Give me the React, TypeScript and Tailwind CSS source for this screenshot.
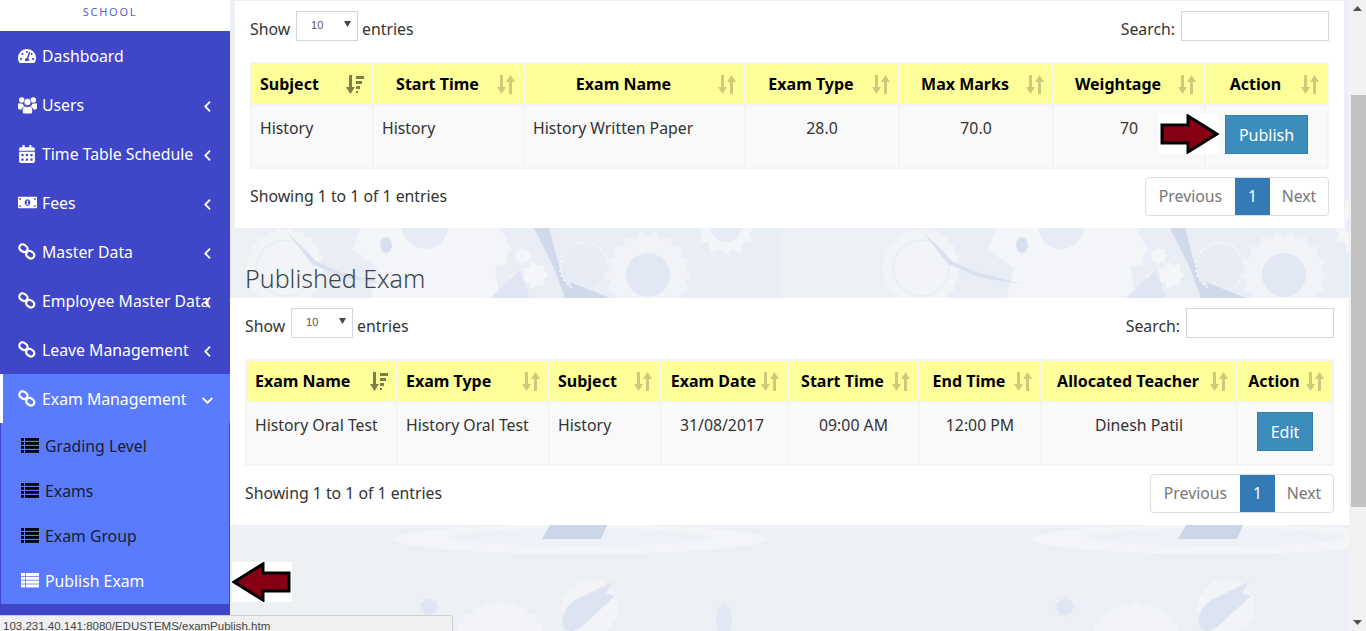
import React from 'react';
import { FaTachometerAlt, FaCalendarAlt, FaMoneyBillAlt } from 'react-icons/fa';

const font = '[font-family:"Noto_Sans",Lato,sans-serif]';

function LinkIcon() {
  return (
    <svg width="18" height="17" viewBox="0 0 18 17" fill="none" stroke="#fff" strokeWidth="2.200">
      <rect x="1.200" y="2" width="8.500" height="6.500" rx="3.200" transform="rotate(35 5.500 5.200)" />
      <rect x="8" y="8.500" width="8.500" height="6.500" rx="3.200" transform="rotate(35 12.300 11.700)" />
    </svg>
  );
}

function UsersIcon() {
  return (
    <svg width="19" height="18" viewBox="0 0 19 18" fill="#fff">
      <circle cx="3.800" cy="4" r="2.800" />
      <circle cx="15.200" cy="4" r="2.800" />
      <circle cx="9.500" cy="6" r="3.600" fill="#fff" stroke="#3f46c8" strokeWidth="0.700" />
      <path d="M0 8.500c0-1 1-1.500 2-1.200 .8 .5 2 .5 2.800 .2 .2 1.300 .8 2.200 1.500 2.900-1.300 .5-2.300 1.500-2.700 3H1.500C.5 13.400 0 12.800 0 12z" />
      <path d="M19 8.500c0-1-1-1.500-2-1.200-.8 .5-2 .5-2.800 .2-.2 1.300-.8 2.200-1.500 2.900 1.300 .5 2.300 1.500 2.700 3h2.100c1 0 1.500-.6 1.500-1.400z" />
      <path d="M5 12.500c.3-1.300 1.200-2 2.300-2 1.300 .9 3.100 .9 4.400 0 1.100 0 2 .7 2.300 2 .3 1.300 .3 2.500 .2 3.500 0 1-.8 1.500-1.600 1.500H6.400c-.8 0-1.600-.5-1.600-1.500-.1-1-.1-2.200 .2-3.500z" />
    </svg>
  );
}

function ListIcon() {
  return (
    <svg width="18" height="15" viewBox="0 0 18 15" fill="#000">
      {[0, 4, 8, 12].map((y) => (
        <g key={y}>
          <rect x="0" y={y} width="3" height="2.800" />
          <rect x="4" y={y} width="14" height="2.800" />
        </g>
      ))}
    </svg>
  );
}

function ThListIcon() {
  return (
    <svg width="18" height="15" viewBox="0 0 18 15" fill="#fff">
      {[0, 3.800, 7.600, 11.400].map((y) => (
        <g key={y}>
          <rect x="0" y={y} width="4" height="3" />
          <rect x="4.800" y={y} width="13.200" height="3" />
        </g>
      ))}
    </svg>
  );
}

function ChevLeft() {
  return (
    <svg width="7" height="11" viewBox="0 0 7 11" fill="none" stroke="#fff" strokeWidth="1.800" className="absolute left-[204px] top-[21px]">
      <path d="M6 .7L1.300 5.500 6 10.300" />
    </svg>
  );
}

function ChevDown() {
  return (
    <svg width="11" height="7" viewBox="0 0 11 7" fill="none" stroke="#fff" strokeWidth="1.800" className="absolute left-[199px] top-[23px]">
      <path d="M.7 1l4.800 4.700L10.300 1" />
    </svg>
  );
}

function SortIcon({ sorted }: { sorted?: boolean }) {
  return (
    <svg width="18" height="19" viewBox="0 0 18 19" className={sorted ? 'opacity-50' : 'opacity-20'} fill="#000">
      <path d="M3 0h3v12h3l-4.500 7L0 12h3z" />
      {sorted ? (
        <>
          <rect x="10" y="1" width="8" height="3" />
          <rect x="10" y="6" width="6" height="3" />
          <rect x="10" y="11" width="4" height="3" />
          <rect x="10" y="16" width="2" height="2" />
        </>
      ) : (
        <path d="M12 19h3V7h3L13.500 0 9 7h3z" />
      )}
    </svg>
  );
}

function Arrow({ left }: { left?: boolean }) {
  return (
    <svg width="60" height="40" viewBox="0 0 60 40" className={left ? '-scale-x-100 bg-white' : 'bg-white'}>
      <path d="M3 11h26V2l29 18-29 18v-9H3z" fill="#850014" stroke="#000" strokeWidth="3" />
    </svg>
  );
}

function gear(cx: number, cy: number, r: number, teeth: number, depth = 0.86) {
  const pts: string[] = [];
  for (let i = 0; i < teeth * 2; i++) {
    const a = (i * Math.PI) / teeth;
    const rr = i % 2 ? r * depth : r;
    pts.push(`${(cx + rr * Math.cos(a)).toFixed(1)},${(cy + rr * Math.sin(a)).toFixed(1)}`);
  }
  return pts.join(' ');
}

function Tile() {
  const pale = '#f3f5f9';
  return (
    <>
      <rect x="300" y="228" width="480" height="70" fill="#e8edf6" />
      <polygon points={gear(285, 268, 40, 22, 0.92)} fill="#f2f4f8" />
      <circle cx="285" cy="268" r="28" fill="none" stroke="#e9edf5" strokeWidth="1.500" />
      <polygon points="360,228 500,228 512,250 495,268 500,298 370,298 378,268 352,250" fill={pale} />
      <path d="M287 232 L316 261 L337 271 L387 284 L345 278 L312 264 Z" fill="#d9e0ef" />
      <ellipse cx="386" cy="245" rx="6" ry="8" fill="#d8e0ef" />
      <polygon points={gear(425, 226, 38, 14, 0.8)} fill="#f5f6fa" />
      <circle cx="425" cy="226" r="23" fill="#e6ebf5" />
      <path d="M534 228 L549 228 L558 262 L583 298 L565 298 L554 268 Z" fill="#d0d9ea" />
      <polygon points={gear(535, 275, 14, 7, 0.7)} fill="#f5f6fa" />
      <polygon points={gear(516, 279, 7, 7, 0.7)} fill="#f5f6fa" />
      <polygon points={gear(501, 259, 8, 7, 0.7)} fill="#f5f6fa" />
      <polygon points={gear(523, 256, 9, 7, 0.7)} fill="#f5f6fa" />
      <circle cx="584" cy="267" r="24" fill="#e8ecf5" stroke="#f6f7fa" strokeWidth="2" strokeDasharray="2 3" />
      <path d="M490 298 L520 270 L530 298 Z" fill="#dfe5f2" />
      <path d="M570 282 L610 298 L575 298 Z" fill="#d0d9ea" />
      <polygon points={gear(648, 275, 44, 18, 0.85)} fill="#f1f3f8" />
      <circle cx="648" cy="275" r="22" fill="#e1e7f3" />
      <polygon points={gear(726, 226, 30, 12, 0.8)} fill="#f3f5f9" />
      <circle cx="726" cy="226" r="16" fill="#e6ebf5" />
      <ellipse cx="580" cy="539" rx="185" ry="15" fill="#f4f5f8" />
      <ellipse cx="580" cy="537" rx="130" ry="9" fill="#eef1f8" />
      <path d="M550 525 L607 525 L601 539 L542 539 Z" fill="#ccd6e9" />
      <polygon points={gear(500, 650, 50, 24, 0.92)} fill="#f2f4f7" />
      <polygon points={gear(590, 608, 30, 16, 0.9)} fill="#f2f4f7" />
      <polygon points={gear(429, 607, 10, 9, 0.7)} fill="#dfe5f2" />
      <path d="M613 582 L606 593 L615 596 L580 628 C560 640 556 612 575 600 Z" fill="#dde4f1" />
      <ellipse cx="724" cy="620" rx="8" ry="16" fill="#e2e8f3" />
    </>
  );
}

function Background() {
  return (
    <svg className="absolute inset-0" width="1119" height="631" viewBox="230 0 1119 631">
      <Tile />
      <g transform="translate(636 0)">
        <Tile />
      </g>
    </svg>
  );
}

type Col = { label: string; w: string; left?: boolean; sorted?: boolean };

function Pager() {
  return (
    <div className="flex h-[39px] text-[#777] border border-[#ddd] rounded">
      <span className="w-[89px] pt-px flex items-center justify-center">Previous</span>
      <span className="w-[35px] pt-px flex items-center justify-center bg-[#337ab7] text-white">1</span>
      <span className="w-[58px] pt-px flex items-center justify-center">Next</span>
    </div>
  );
}

function Controls() {
  return (
    <div className="flex items-start justify-between h-[30px]">
      <div className="flex items-start gap-[5px]">
        <span className="pt-[7px]">Show</span>
        <div className="ml-px -mr-px w-[62px] h-[30px] border border-[#d2d6de] flex items-center justify-between pl-[14px] pr-[4px] [font-family:'Liberation_Sans',sans-serif] text-[11px] text-[#555]">
          <span className="-mt-[1px]">10</span>
          <svg width="7" height="6" viewBox="0 0 7 6" className="mb-[4px] mr-[2px]">
            <path d="M0 0h7L3.500 6z" fill="#444" />
          </svg>
        </div>
        <span className="pt-[7px]">entries</span>
      </div>
      <div className="flex items-start gap-[6px]">
        <span className="pt-[7px]">Search:</span>
        <div className="w-[148px] h-[30px] border border-[#d2d6de]" />
      </div>
    </div>
  );
}

function DataTable({ cols, row }: { cols: Col[]; row: React.ReactNode[] }) {
  return (
    <table className="table-fixed w-full border-collapse border-2 border-[#f4f4f4] mt-[21px]">
      <thead>
        <tr className="bg-[#ffff99] h-[42px]">
          {cols.map((c) => (
            <th
              key={c.label}
              className={`relative border-2 border-[#f4f4f4] font-bold text-[16px] text-black pl-[8px] pr-[30px] whitespace-nowrap ${c.w} ${c.left ? 'text-left' : 'text-center'}`}
            >
              {c.label}
              <span className="absolute right-[8px] top-[11px]">
                <SortIcon sorted={c.sorted} />
              </span>
            </th>
          ))}
        </tr>
      </thead>
      <tbody>
        <tr className="bg-[#f9f9f9] h-[63px]">
          {row.map((v, i) => (
            <td
              key={i}
              className={`border-2 border-[#f4f4f4] align-top pt-[11px] pl-[8px] pr-[8px] ${cols[i].left ? 'text-left' : 'text-center'}`}
            >
              {v}
            </td>
          ))}
        </tr>
      </tbody>
    </table>
  );
}

function Footer() {
  return (
    <div className="flex items-center justify-between mt-[8px]">
      <span>Showing 1 to 1 of 1 entries</span>
      <Pager />
    </div>
  );
}

const cols1: Col[] = [
  { label: 'Subject', w: 'w-[122px]', left: true, sorted: true },
  { label: 'Start Time', w: 'w-[151px]' },
  { label: 'Exam Name', w: 'w-[221px]' },
  { label: 'Exam Type', w: 'w-[154px]' },
  { label: 'Max Marks', w: 'w-[154px]' },
  { label: 'Weightage', w: 'w-[152px]' },
  { label: 'Action', w: 'w-auto' },
];

const cols2: Col[] = [
  { label: 'Exam Name', w: 'w-[151px]', left: true, sorted: true },
  { label: 'Exam Type', w: 'w-[152px]', left: true },
  { label: 'Subject', w: 'w-[112px]', left: true },
  { label: 'Exam Date', w: 'w-[127px]' },
  { label: 'Start Time', w: 'w-[131px]' },
  { label: 'End Time', w: 'w-[122px]' },
  { label: 'Allocated Teacher', w: 'w-[196px]' },
  { label: 'Action', w: 'w-auto' },
];

const Btn = ({ children, w }: { children: React.ReactNode; w: string }) => (
  <div className={`h-[39px] -mt-[2px] ml-[11px] bg-[#3c8dbc] border border-[#367fa9] text-[16px] text-white flex items-center justify-center ${w}`}>
    {children}
  </div>
);

const menu: { label: string; icon: React.ReactNode; chev?: boolean }[] = [
  { label: 'Dashboard', icon: <FaTachometerAlt size={18} /> },
  { label: 'Users', icon: <UsersIcon />, chev: true },
  { label: 'Time Table Schedule', icon: <FaCalendarAlt size={18} />, chev: true },
  { label: 'Fees', icon: <FaMoneyBillAlt size={19} />, chev: true },
  { label: 'Master Data', icon: <LinkIcon />, chev: true },
  { label: 'Employee Master Data', icon: <LinkIcon />, chev: true },
  { label: 'Leave Management', icon: <LinkIcon />, chev: true },
];

const sub = ['Grading Level', 'Exams', 'Exam Group', 'Publish Exam'];

function Sidebar() {
  return (
    <aside className="w-[230px] shrink-0 bg-[#3f46c8] text-white flex flex-col">
      <div className="h-[31px] bg-white text-[#5a60c4] text-[11px] tracking-[1.700px] text-center pt-[4px] pr-[10px]">SCHOOL</div>
      {menu.map((m) => (
        <div key={m.label} className="h-[49px] flex items-center pl-[18px] relative whitespace-nowrap">
          <span className="w-[24px] shrink-0 flex">{m.icon}</span>
          <span className="pt-[2px]">{m.label}</span>
          {m.chev && <ChevLeft />}
        </div>
      ))}
      <div className="h-[49px] flex items-center pl-[15px] relative bg-[#5b7bff] border-l-[3px] border-white">
        <span className="w-[24px] shrink-0 flex">
          <LinkIcon />
        </span>
        <span className="pt-[2px]">Exam Management</span>
        <ChevDown />
      </div>
      <div className="h-[181px] bg-[#5b7bff] border-l border-r border-[#3f46c8]">
        {sub.map((s, i) => (
          <div
            key={s}
            className={`h-[45px] flex items-center pl-[20px] ${i === 3 ? 'text-white' : 'text-[#14202e]'}`}
          >
            <span className="w-[24px] shrink-0 flex">{i === 3 ? <ThListIcon /> : <ListIcon />}</span>
            <span className="pt-[2px]">{s}</span>
          </div>
        ))}
      </div>
    </aside>
  );
}

function Scrollbar() {
  return (
    <div className="w-[17px] shrink-0 bg-[#f1f1f1] flex flex-col items-end">
      <div className="w-full h-[17px] flex items-center justify-center">
        <svg width="9" height="5" viewBox="0 0 9 5"><path d="M4.500 0L9 5H0z" fill="#505050" /></svg>
      </div>
      <div className="h-[78px]" />
      <div className="w-[15px] h-[412px] bg-[#c1c1c1]" />
      <div className="flex-1" />
      <div className="w-full h-[17px] flex items-center justify-center">
        <svg width="9" height="5" viewBox="0 0 9 5"><path d="M0 0h9L4.500 5z" fill="#505050" /></svg>
      </div>
    </div>
  );
}

export default function App() {
  return (
    <div className={`relative h-[631px] w-[1366px] overflow-hidden flex bg-[#eceff4] text-[#333] text-[15.800px] ${font}`}>
      <Sidebar />
      <main className="relative flex-1 min-w-0 pt-px">
        <Background />
        <div className="relative">
          <section className="mx-[5px] h-[227px] bg-white px-[15px] pt-[10px]">
            <Controls />
            <DataTable
              cols={cols1}
              row={[
                'History',
                <span className="block text-left">History</span>,
                <span className="block text-left">History Written Paper</span>,
                '28.0',
                '70.0',
                '70',
                <Btn w="w-[83px]">Publish</Btn>,
              ]}
            />
            <Footer />
          </section>
          <h2 className="h-[70px] pl-[15px] pt-[31px] text-[25px] leading-[38px] font-light text-[#3c4650]">Published Exam</h2>
          <section className="h-[227px] bg-white px-[15px] pt-[10px]">
            <Controls />
            <DataTable
              cols={cols2}
              row={[
                'History Oral Test',
                'History Oral Test',
                'History',
                <span className="-ml-[5px]">31/08/2017</span>,
                '09:00 AM',
                '12:00 PM',
                'Dinesh Patil',
                <Btn w="w-[56px]">Edit</Btn>,
              ]}
            />
            <Footer />
          </section>
        </div>
        <div className="absolute left-[929px] top-[114px] flex">
          <Arrow />
        </div>
        <div className="absolute left-[2px] top-[562px] flex">
          <Arrow left />
        </div>
      </main>
      <Scrollbar />
      <div className="absolute left-0 bottom-0 w-[453px] h-[16px] overflow-hidden bg-[#f0f0f0] border-t border-r border-[#cfcfcf] rounded-tr-[3px] [font-family:'Liberation_Sans',sans-serif] text-[11.500px] leading-[16px] pt-[2px] pl-[3px] text-[#444]">
        103.231.40.141:8080/EDUSTEMS/examPublish.htm
      </div>
    </div>
  );
}
